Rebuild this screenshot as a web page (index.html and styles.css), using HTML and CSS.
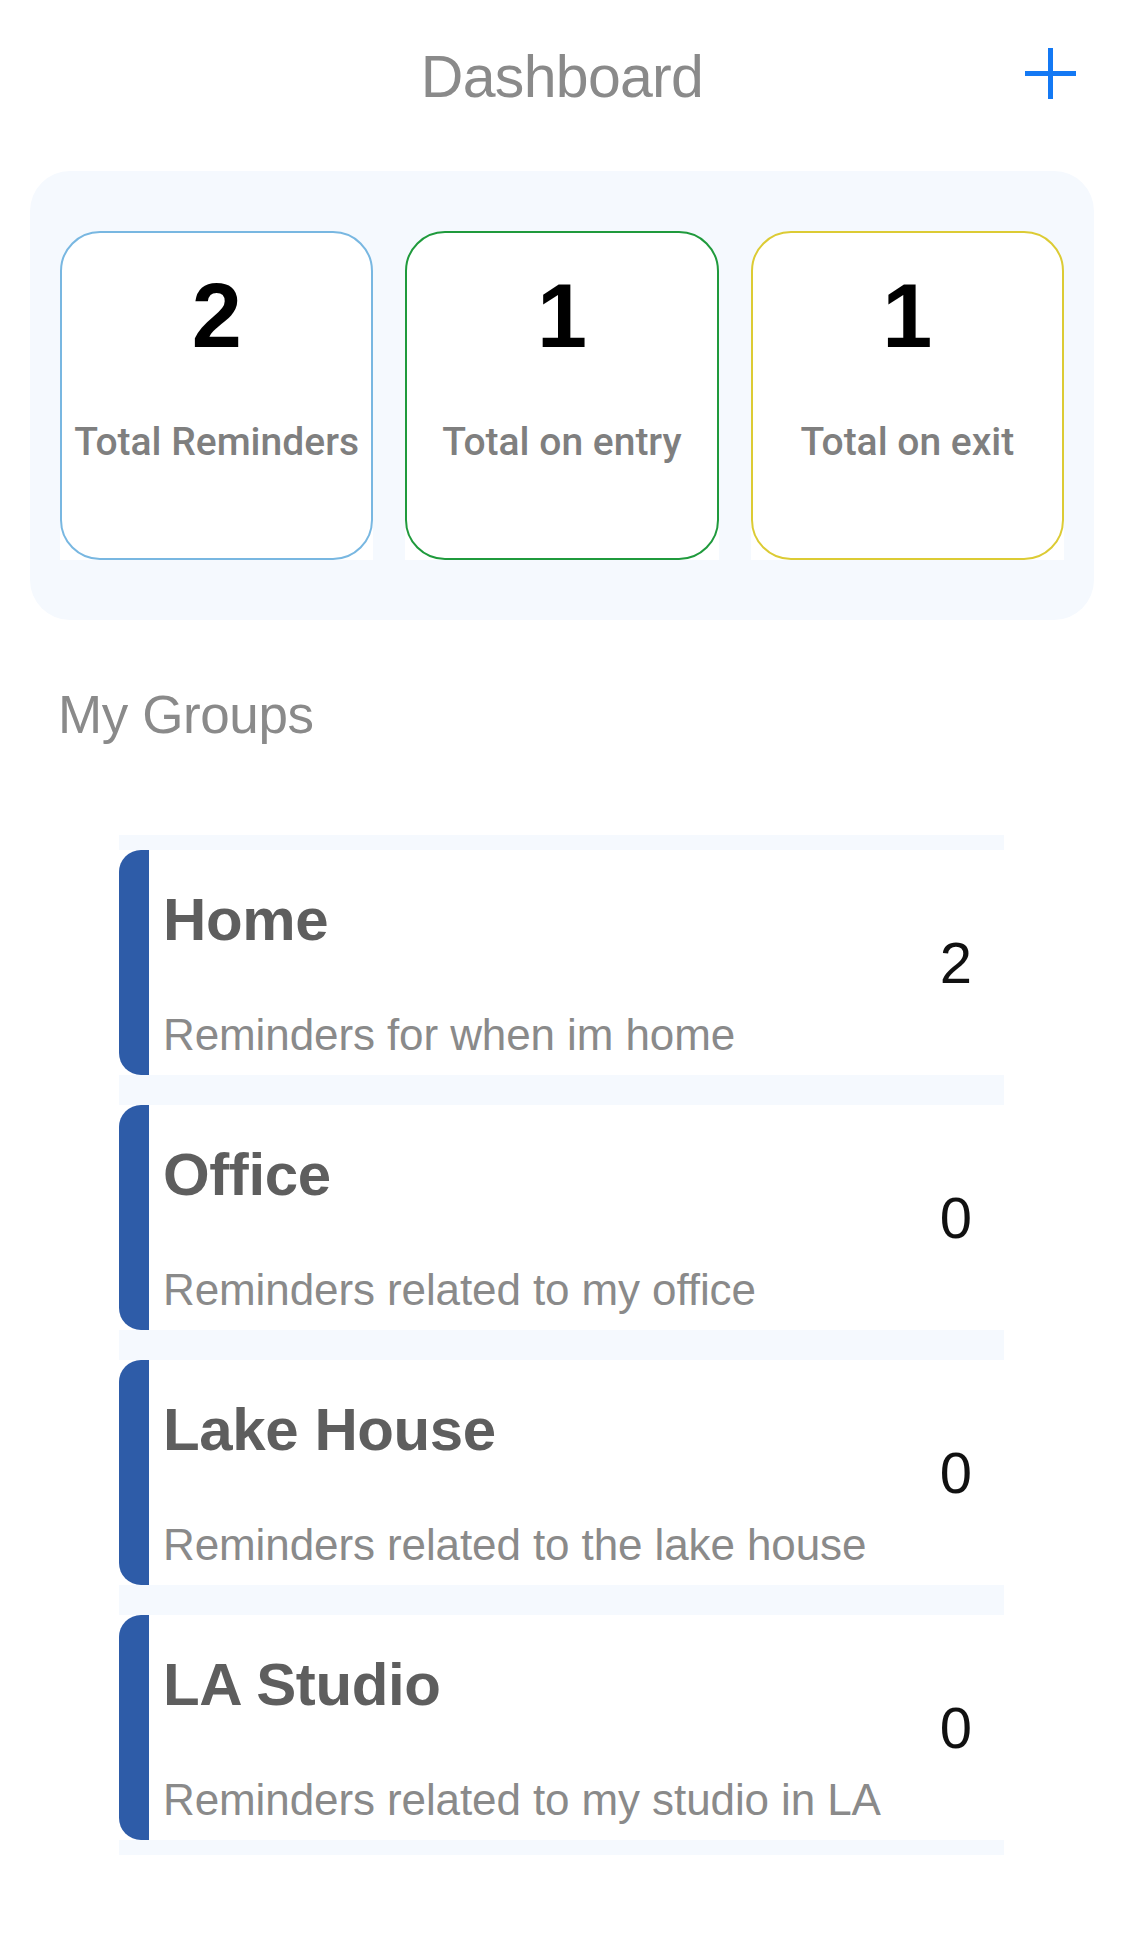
FILE: index.html
```html
<!DOCTYPE html>
<html lang="en">
<head>
<meta charset="utf-8">
<title>Dashboard</title>
<link rel="stylesheet" href="styles.css">
</head>
<body>
<div class="page">
  <header class="topbar">
    <div class="spacer"></div>
    <h1 class="title">Dashboard</h1>
    <button class="add-btn" aria-label="Add">
      <svg width="51" height="51" viewBox="0 0 51 51"><path d="M25.5 0V51M0 25.5H51" stroke="#1479f4" stroke-width="5" fill="none"/></svg>
    </button>
  </header>

  <section class="stats">
    <div class="stat-wrap">
      <div class="stat stat-blue">
        <div class="stat-num">2</div>
        <div class="stat-label">Total Reminders</div>
      </div>
    </div>
    <div class="stat-wrap">
      <div class="stat stat-green">
        <div class="stat-num">1</div>
        <div class="stat-label">Total on entry</div>
      </div>
    </div>
    <div class="stat-wrap">
      <div class="stat stat-yellow">
        <div class="stat-num">1</div>
        <div class="stat-label">Total on exit</div>
      </div>
    </div>
  </section>

  <h2 class="section-title">My Groups</h2>

  <div class="groups">
    <div class="group">
      <div class="group-bar"></div>
      <div class="group-body">
        <div class="group-name">Home</div>
        <div class="group-desc">Reminders for when im home</div>
      </div>
      <div class="group-count">2</div>
    </div>
    <div class="group">
      <div class="group-bar"></div>
      <div class="group-body">
        <div class="group-name">Office</div>
        <div class="group-desc">Reminders related to my office</div>
      </div>
      <div class="group-count">0</div>
    </div>
    <div class="group">
      <div class="group-bar"></div>
      <div class="group-body">
        <div class="group-name">Lake House</div>
        <div class="group-desc">Reminders related to the lake house</div>
      </div>
      <div class="group-count">0</div>
    </div>
    <div class="group">
      <div class="group-bar"></div>
      <div class="group-body">
        <div class="group-name">LA Studio</div>
        <div class="group-desc">Reminders related to my studio in LA</div>
      </div>
      <div class="group-count">0</div>
    </div>
  </div>
</div>
</body>
</html>
```

FILE: styles.css
```css
* { box-sizing: border-box; }

html, body {
  margin: 0;
  padding: 0;
  background: #ffffff;
}

body {
  font-family: "Liberation Sans", Arial, sans-serif;
  width: 1124px;
  min-height: 1950px;
}

.page {
  display: flex;
  flex-direction: column;
}

.topbar {
  display: grid;
  grid-template-columns: 1fr auto 1fr;
  align-items: start;
  padding-top: 48px;
}

.title {
  margin: 0;
  font-size: 59px;
  line-height: 59px;
  font-weight: 400;
  letter-spacing: -0.7px;
  color: #8a8a8a;
  text-align: center;
}

.add-btn {
  justify-self: end;
  margin-right: 48px;
  width: 51px;
  height: 51px;
  padding: 0;
  border: 0;
  background: none;
  display: block;
}

.add-btn svg { display: block; }

.stats {
  margin: 64px 30px 0;
  padding: 60px 30px;
  background: #f5f9fe;
  border-radius: 40px;
  display: grid;
  grid-template-columns: repeat(3, 1fr);
  gap: 32px;
}

.stat-wrap {
  background: linear-gradient(to bottom, transparent 55%, #ffffff 55%);
}

.stat {
  height: 329px;
  background: #ffffff;
  border: 2px solid;
  border-radius: 40px;
  display: flex;
  flex-direction: column;
  align-items: center;
  padding-top: 38px;
}

.stat-blue { border-color: #78b7e1; }
.stat-green { border-color: #1f9a3c; }
.stat-yellow { border-color: #dccb34; }

.stat-num {
  font-family: "Liberation Sans", Arial, sans-serif;
  font-weight: 700;
  font-size: 90px;
  line-height: 90px;
  color: #000000;
}

.stat-label {
  margin-top: 62px;
  font-family: Roboto, "Liberation Sans", sans-serif;
  font-weight: 500;
  font-size: 39px;
  line-height: 38px;
  color: #7f7f7f;
  white-space: nowrap;
}

.section-title {
  margin: 68px 0 0 58px;
  font-size: 53px;
  line-height: 53px;
  font-weight: 400;
  letter-spacing: -0.4px;
  color: #8a8a8a;
}

.groups {
  margin: 94px 0 0 119px;
  width: 885px;
  padding: 15px 0;
  background: #f5f9fe;
  display: flex;
  flex-direction: column;
  gap: 30px;
}

.group {
  height: 225px;
  background: #ffffff;
  display: flex;
  align-items: center;
}

.group-bar {
  align-self: stretch;
  width: 30px;
  background: #2e5ca8;
  border-radius: 22px 0 0 22px;
}

.group-body {
  flex: 1;
  align-self: stretch;
  display: flex;
  flex-direction: column;
  padding: 40px 0 18px 14px;
}

.group-name {
  font-weight: 700;
  font-size: 60px;
  line-height: 60px;
  letter-spacing: -0.4px;
  color: #5e5e5e;
}

.group-desc {
  margin-top: 63px;
  font-size: 44px;
  line-height: 44px;
  letter-spacing: -0.1px;
  color: #8a8a8a;
  white-space: nowrap;
}

.group-count {
  padding-right: 32px;
  font-size: 58px;
  line-height: 58px;
  color: #111111;
}
```
